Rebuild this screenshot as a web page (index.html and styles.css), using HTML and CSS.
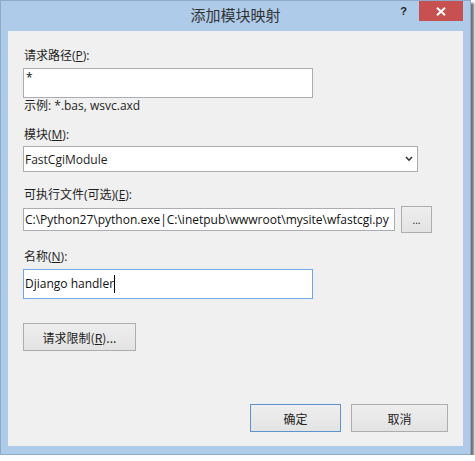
FILE: index.html
```html
<!DOCTYPE html>
<html lang="zh-CN">
<head>
    <meta charset="UTF-8">
    <title>添加模块映射</title>
    <link rel="stylesheet" href="styles.css">
</head>
<body>
    <div class="window">
        <div class="titlebar">
            <span></span>
            <span class="title">添加模块映射</span>
            <div class="caption-buttons">
                <span class="help">?</span>
                <span class="close">
                    <svg width="10" height="9" viewBox="0 0 10 9"><path d="M1 0.8 L9 8.2 M9 0.8 L1 8.2" stroke="#fff" stroke-width="2"/></svg>
                </span>
            </div>
        </div>
        <div class="client">
            <label class="field-label">请求路径(<u>P</u>):</label>
            <input class="textbox textbox-tall" value="*">
            <div class="hint">示例: *.bas, wsvc.axd</div>

            <label class="field-label label-module">模块(<u>M</u>):</label>
            <div class="combo">
                <span>FastCgiModule</span>
                <svg width="8" height="6" viewBox="0 0 8 6"><path d="M1 1 L4 4.2 L7 1" fill="none" stroke="#333" stroke-width="1.6"/></svg>
            </div>

            <label class="field-label label-exe">可执行文件(可选)(<u>E</u>):</label>
            <div class="path-row">
                <input class="textbox textbox-path" value="C:\Python27\python.exe|C:\inetpub\wwwroot\mysite\wfastcgi.py">
                <button class="btn btn-browse">...</button>
            </div>

            <label class="field-label label-name">名称(<u>N</u>):</label>
            <div class="textbox textbox-tall textbox-focused">Djiango handler<span class="caret"></span></div>

            <button class="btn btn-limit">请求限制(<u>R</u>)...</button>

            <div class="footer">
                <button class="btn btn-default btn-ok">确定</button>
                <button class="btn btn-cancel">取消</button>
            </div>
        </div>
    </div>
</body>
</html>
```

FILE: styles.css
```css
body {
    margin: 0;
    background-color: #fff;
    font-family: "Open Sans", "Noto Sans CJK SC", sans-serif;
    font-size: 12px;
    color: #1e1e1e;
}
.window {
    width: 471px;
    height: 455px;
    box-sizing: border-box;
    border: 1px solid #8fa9c9;
    background-color: #aecbea;
    box-shadow: 3px 3px 2px rgba(0, 0, 0, 0.55);
    display: flex;
    flex-direction: column;
}
.titlebar {
    height: 30px;
    display: grid;
    grid-template-columns: 1fr auto 1fr;
    align-items: start;
}
.title {
    font-family: "Noto Sans CJK SC", sans-serif;
    font-size: 15px;
    line-height: 28px;
    color: #333;
}
.caption-buttons {
    display: flex;
    justify-content: flex-end;
    align-items: flex-start;
    gap: 12px;
    padding-right: 7px;
}
.help {
    font-family: "Liberation Sans", sans-serif;
    font-weight: bold;
    font-size: 11px;
    line-height: 11px;
    margin-top: 5px;
    color: #222;
}
.close {
    width: 44px;
    height: 20px;
    background-color: #c75050;
    display: flex;
    align-items: center;
    justify-content: center;
}
.client {
    margin: 0 7px;
    height: 415px;
    box-sizing: border-box;
    background-color: #f0f0f0;
    padding: 17px 15px 14px;
    display: flex;
    flex-direction: column;
    align-items: flex-start;
}
.field-label {
    display: block;
    line-height: 16px;
    margin-left: 1px;
}
u {
    text-underline-offset: 1px;
}
.label-module {
    margin-top: 13px;
}
.label-exe {
    margin-top: 15px;
}
.label-name {
    margin-top: 16px;
}
.hint {
    line-height: 16px;
    margin-left: 1px;
}
.textbox {
    box-sizing: border-box;
    border: 1px solid #abadb3;
    background-color: #fff;
    font: inherit;
    color: #111;
    outline: none;
    margin: 0;
}
.textbox-tall {
    width: 290px;
    height: 30px;
    margin-top: 4px;
    padding: 0 2px 12px;
    line-height: 16px;
}
.textbox-focused {
    border-color: #6fa8e0;
    padding: 5px 1px 0;
    display: flex;
    align-items: center;
    height: 30px;
    padding-bottom: 6px;
}
.caret {
    width: 1px;
    height: 18px;
    background-color: #000;
}
.combo {
    box-sizing: border-box;
    width: 395px;
    height: 26px;
    margin-top: 3px;
    border: 1px solid #acacac;
    background-color: #fff;
    display: flex;
    align-items: center;
    justify-content: space-between;
    padding: 0 4px 0 1px;
}
.path-row {
    display: flex;
    align-items: center;
    gap: 6px;
    margin-top: 3px;
}
.textbox-path {
    width: 372px;
    height: 23px;
    padding: 0 1px;
}
.btn {
    box-sizing: border-box;
    height: 28px;
    border: 1px solid #adadad;
    background: linear-gradient(#eeeeee, #e3e3e3);
    font-family: "Noto Sans CJK SC", sans-serif;
    font-size: 12px;
    color: #222;
    padding: 0;
    margin: 0;
}
.btn-browse {
    width: 31px;
    height: 27px;
    font-family: "Open Sans", sans-serif;
    font-size: 10px;
    line-height: 10px;
}
.btn-limit {
    width: 113px;
    margin-top: 24px;
}
.footer {
    margin-top: auto;
    align-self: stretch;
    display: flex;
    justify-content: flex-end;
    gap: 10px;
}
.btn-default {
    border-color: #5b95cf;
}
.btn-ok {
    width: 91px;
}
.btn-cancel {
    width: 97px;
}
```
